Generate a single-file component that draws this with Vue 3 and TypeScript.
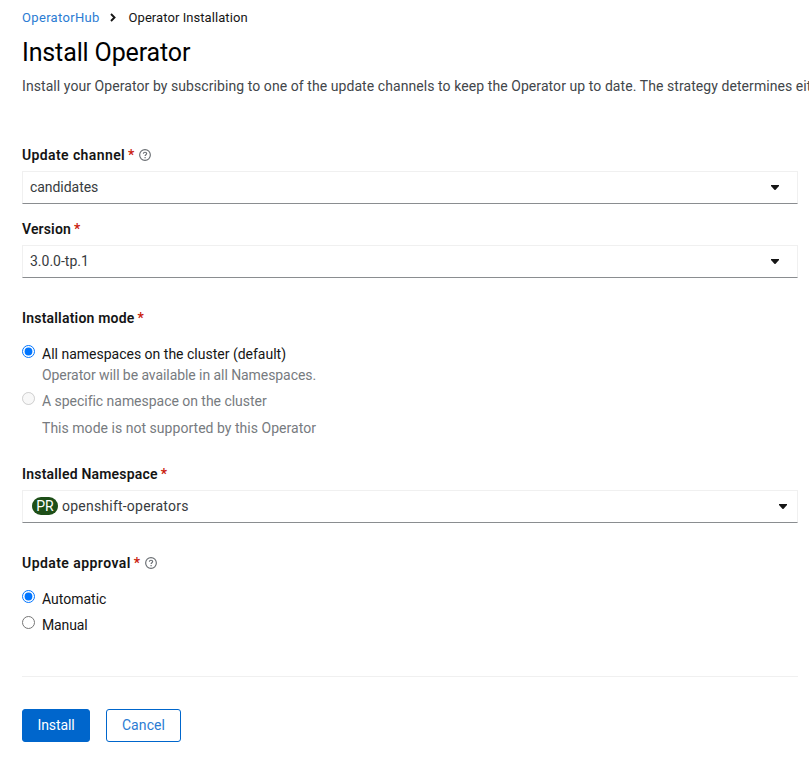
<script setup lang="ts">
import { ref } from 'vue'

interface RadioOption {
  value: string
  label: string
  hint?: string
  note?: string
  disabled?: boolean
}

const modes: RadioOption[] = [
  {
    value: 'all',
    label: 'All namespaces on the cluster (default)',
    hint: 'Operator will be available in all Namespaces.',
  },
  {
    value: 'single',
    label: 'A specific namespace on the cluster',
    note: 'This mode is not supported by this Operator',
    disabled: true,
  },
]
const approvals: RadioOption[] = [
  { value: 'auto', label: 'Automatic' },
  { value: 'manual', label: 'Manual' },
]
const mode = ref('all')
const approval = ref('auto')
</script>

<template>
  <main class="page">
    <nav class="breadcrumb">
      <a class="crumb-link">OperatorHub</a>
      <svg class="chevron" viewBox="0 0 6 9"><path d="M1 1l3.5 3.5L1 8" /></svg>
      <span class="crumb-current">Operator Installation</span>
    </nav>
    <h1 class="title">Install Operator</h1>
    <p class="intro">Install your Operator by subscribing to one of the update channels to keep the Operator up to date. The strategy determines eit</p>

    <section class="field channel">
      <div class="label"><span class="l-channel">Update channel</span><span class="star">*</span>
        <svg class="help" viewBox="0 0 12 12"><circle cx="6" cy="6" r="5.35" /><path d="M4.3 4.7C4.4 3.7 5.1 3.2 6 3.2c1 0 1.7.6 1.7 1.4C7.7 5.8 6.1 5.7 6.1 7" /><path d="M6.1 8v1.2" /></svg>
      </div>
      <button class="select" type="button"><span class="s-channel">candidates</span><i class="caret"></i></button>
    </section>

    <section class="field version">
      <div class="label"><span class="l-version">Version</span><span class="star">*</span></div>
      <button class="select" type="button"><span class="s-version">3.0.0-tp.1</span><i class="caret"></i></button>
    </section>

    <section class="field mode">
      <div class="label"><span class="l-mode">Installation mode</span><span class="star">*</span></div>
      <div class="radios">
        <label v-for="m in modes" :key="m.value" class="radio" :class="[m.value, { disabled: m.disabled }]">
          <input v-model="mode" type="radio" name="mode" :value="m.value" :disabled="m.disabled" />
          <span class="radio-text">{{ m.label }}</span>
          <span v-if="m.hint" class="hint">{{ m.hint }}</span>
          <span v-if="m.note" class="note">{{ m.note }}</span>
        </label>
      </div>
    </section>

    <section class="field namespace">
      <div class="label"><span class="l-namespace">Installed Namespace</span><span class="star">*</span></div>
      <button class="select wide" type="button"><b class="badge">PR</b><span class="s-namespace">openshift-operators</span><i class="caret"></i></button>
    </section>

    <section class="field approval">
      <div class="label"><span class="l-approval">Update approval</span><span class="star">*</span>
        <svg class="help" viewBox="0 0 12 12"><circle cx="6" cy="6" r="5.35" /><path d="M4.3 4.7C4.4 3.7 5.1 3.2 6 3.2c1 0 1.7.6 1.7 1.4C7.7 5.8 6.1 5.7 6.1 7" /><path d="M6.1 8v1.2" /></svg>
      </div>
      <div class="radios">
        <label v-for="a in approvals" :key="a.value" class="radio" :class="a.value">
          <input v-model="approval" type="radio" name="approval" :value="a.value" />
          <span class="radio-text">{{ a.label }}</span>
        </label>
      </div>
    </section>

    <footer class="actions">
      <button class="btn primary" type="button">Install</button>
      <button class="btn secondary" type="button">Cancel</button>
    </footer>
  </main>
</template>

<style>
body { background: #fff; overflow: hidden; }
</style>

<style scoped>
.page {
  box-sizing: border-box;
  height: 761px;
  padding: 7px 11px 0 22px;
  overflow: hidden;
  font-family: Roboto, "Open Sans", sans-serif;
  font-size: 14px;
  line-height: 21px;
  color: #151515;
  white-space: nowrap;
}
.breadcrumb { display: flex; align-items: center; height: 21px; font-size: 13px; }
.crumb-link { color: #2b7cd3; width: 88px; letter-spacing: .33px; }
.crumb-current { letter-spacing: .07px; }
.chevron { width: 6px; height: 9px; margin-right: 12.5px; fill: none; stroke: #151515; stroke-width: 1.9; }
.title { margin: 8px 0 0; height: 34px; line-height: 34px; font-size: 25px; font-weight: 400; letter-spacing: -.13px; color: #000; }
.intro { margin: 6px -11px 0 0; height: 21px; color: #42464a; letter-spacing: .072px; }
.field { display: flex; flex-direction: column; }
.channel { margin-top: 48px; }
.version { margin-top: 15px; }
.mode { margin-top: 30px; }
.namespace { margin-top: 25px; }
.approval { margin-top: 30px; }
.label { display: flex; align-items: center; height: 21px; font-weight: 600; margin-bottom: 5px; }
.l-channel { letter-spacing: .39px; }
.l-version { letter-spacing: .14px; }
.l-mode { letter-spacing: .2px; }
.l-namespace { letter-spacing: .2px; }
.l-approval { letter-spacing: .44px; }
.star { width: 6px; color: #c9190b; margin-left: 3px; }
.help { width: 12px; height: 12px; margin: -1px 0 0 5px; fill: none; stroke: #6a6e73; stroke-width: 1.15; }
.select {
  box-sizing: border-box;
  display: flex;
  align-items: center;
  width: 776px;
  height: 33px;
  padding: 0 18px 0 7px;
  border: 1px solid #f0f0f0;
  border-bottom-color: #8a8d90;
  background: #fff;
  font: inherit;
  color: #383b3e;
}
.select.wide { padding: 0 10px 0 9px; }
.s-channel { letter-spacing: -.05px; }
.s-namespace { letter-spacing: .22px; }
.caret { margin-left: auto; width: 8px; height: 5px; background: #151515; clip-path: polygon(0 0, 100% 0, 100% 20%, 55% 100%, 45% 100%, 0 20%); }
.badge { width: 26px; height: 18px; line-height: 18px; border-radius: 9px; background: #1e4f18; color: #fff; font-weight: 400; text-align: center; margin: -1px 4px 0 0; }
.radios { padding-top: 10px; }
.radio { display: grid; grid-template-columns: 20px 1fr; align-items: start; }
.radio input { width: 13px; height: 13px; margin: 1px 0 0; }
.radio-text { line-height: 21px; }
.single .radio-text { letter-spacing: -.03px; }
.manual .radio-text { letter-spacing: -.12px; }
.hint, .note { grid-column: 2; color: #777b80; }
.hint { letter-spacing: -.07px; }
.radio + .radio { margin-top: 5px; }
.note { margin-top: 6px; letter-spacing: .03px; }
.disabled { color: #777b80; }
.actions { display: flex; gap: 16px; margin-top: 40px; padding-top: 32px; border-top: 1px solid #f0f0f0; }
.btn { box-sizing: border-box; height: 33px; padding: 0; border: 1px solid #06c; border-radius: 3px; font: inherit; }
.primary { width: 68px; background: #06c; color: #fff; letter-spacing: -.1px; }
.secondary { width: 75px; background: #fff; color: #2b7cd3; letter-spacing: .1px; }
</style>
